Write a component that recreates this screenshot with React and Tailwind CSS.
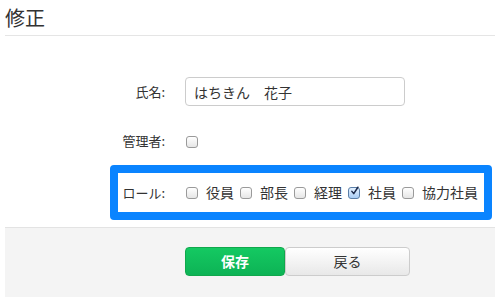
import { useState } from 'react';

const font = { fontFamily: '"Noto Sans CJK JP", "Noto Sans", sans-serif' };

function Box({ checked, onClick }) {
  return (
    <span
      onClick={onClick}
      className={
        'inline-flex items-center justify-center w-[12px] h-[12px] rounded-[3px] border shrink-0 ' +
        (checked
          ? 'border-[#5b7fa8] bg-gradient-to-b from-[#e3f0ff] to-[#a9cdf5]'
          : 'border-[#9a9a9a] bg-gradient-to-b from-white to-[#e6e6e6]')
      }
    >
      {checked && (
        <svg width="12" height="12" viewBox="0 0 12 12" className="-mt-[3px] ml-[1px]">
          <path d="M2.5 6.5 L5 9.5 L10.5 1" fill="none" stroke="#1c2a4a" strokeWidth="2" strokeLinecap="round" strokeLinejoin="round" />
        </svg>
      )}
    </span>
  );
}

export default function App() {
  const [name, setName] = useState('はちきん　花子');
  const [admin, setAdmin] = useState(false);
  const [roles, setRoles] = useState({ 役員: false, 部長: false, 経理: false, 社員: true, 協力社員: false });

  const toggle = (k) => setRoles(prev => ({ ...prev, [k]: !prev[k] }));

  return (
    <div className="bg-white w-[495px] h-[308px] pl-[5px] text-[#333]" style={font}>
      {/* header */}
      <div className="h-[36px] border-b border-[#e5e5e5] flex items-center">
        <h1 className="text-[20px] leading-none pt-[1px]">修正</h1>
      </div>

      {/* form */}
      <div className="flex items-center h-[29px] mt-[41px]">
        <label className="w-[160px] text-right text-[13px]">氏名:</label>
        <input
          value={name}
          onChange={(e) => setName(e.target.value)}
          className="ml-[20px] w-[220px] h-[29px] px-[8px] text-[14px] border border-[#cccccc] rounded-[4px] outline-none"
        />
      </div>

      <div className="flex items-center h-[20px] mt-[25px]">
        <label className="w-[160px] text-right text-[13px]">管理者:</label>
        <div className="ml-[21px]">
          <Box checked={admin} onClick={() => setAdmin(!admin)} />
        </div>
      </div>

      <div className="ml-[105px] mt-[14px] w-[382px] h-[55px] border-[8px] border-[#0a84ff] rounded-[4px] flex items-center">
        <label className="w-[47px] text-right text-[13px]">ロール:</label>
        <div className="ml-[21px] flex items-center text-[14px]">
          {Object.keys(roles).map(k => (
            <div key={k} className="flex items-center mr-[6px]">
              <Box checked={roles[k]} onClick={() => toggle(k)} />
              <span className="ml-[8px]">{k}</span>
            </div>
          ))}
        </div>
      </div>

      {/* footer */}
      <div className="mt-[7px] h-[70px] bg-[#f4f4f4] border-t border-[#e3e3e3] pt-[19px] flex">
        <button className="ml-[180px] w-[100px] h-[29px] rounded-[4px] border border-[#10a84c] bg-gradient-to-b from-[#14c962] to-[#0db355] text-white font-bold text-[14px]">
          保存
        </button>
        <button className="w-[125px] h-[29px] rounded-[4px] border border-[#cccccc] bg-gradient-to-b from-white to-[#e8e8e8] text-[14px] text-[#333]">
          戻る
        </button>
      </div>
    </div>
  );
}
